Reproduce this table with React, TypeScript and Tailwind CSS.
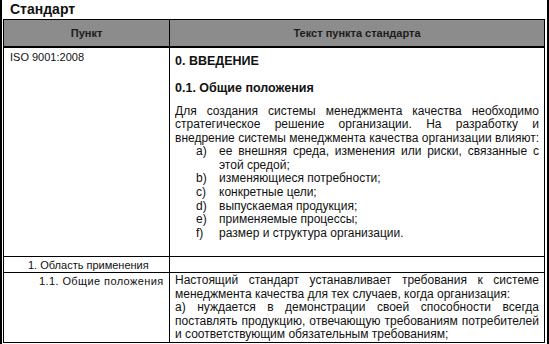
import React from "react";

const listItems: [string, string[]][] = [
  ["a)", ["ее внешняя среда, изменения или риски, связанные с", "этой средой;"]],
  ["b)", ["изменяющиеся потребности;"]],
  ["c)", ["конкретные цели;"]],
  ["d)", ["выпускаемая продукция;"]],
  ["e)", ["применяемые процессы;"]],
  ["f)", ["размер и структура организации."]],
];

// строка с выравниванием по ширине (последняя строка тоже растягивается)
function JLine({ children }: { children: React.ReactNode }) {
  return <div className="text-justify [text-align-last:justify]">{children}</div>;
}

export default function App() {
  return (
    <div className="w-[549px] h-[344px] overflow-hidden bg-white border-x-2 border-black text-[#111] font-['Liberation_Sans',Arial,sans-serif]">
      <div className="h-[19px] pl-[8px] text-[14px] font-bold leading-[18px]">Стандарт</div>
      <table className="ml-px w-[542px] table-fixed border-collapse">
        <colgroup>
          <col className="w-[166px]" />
          <col />
        </colgroup>
        <thead>
          <tr className="h-[27px] bg-[#8c8c8c] text-[11px] font-bold text-[#1c1c1c]">
            <th className="border border-b-2 border-black text-center">Пункт</th>
            <th className="border border-b-2 border-black text-center">Текст пункта стандарта</th>
          </tr>
        </thead>
        <tbody>
          <tr className="h-[210px] align-top">
            <td className="border border-black pl-[6px] pt-[3px] text-[11px] leading-[13px]">ISO 9001:2008</td>
            <td className="border border-black px-[5px] text-[12px] leading-[13.6px]">
              <div className="mt-[6px] text-[12.5px] font-bold leading-[15px]">0. ВВЕДЕНИЕ</div>
              <div className="mt-[12px] text-[12.5px] font-bold leading-[15px]">0.1. Общие положения</div>
              <div className="mt-[9px]">
                <JLine>Для создания системы менеджмента качества необходимо</JLine>
                <JLine>стратегическое решение организации. На разработку и</JLine>
                <JLine>внедрение системы менеджмента качества организации влияют:</JLine>
              </div>
              <div className="ml-[21px]">
                {listItems.map(([label, lines]) => (
                  <div key={label} className="flex">
                    <span className="w-[23px] shrink-0">{label}</span>
                    <div className="flex-1">
                      {lines.map((l, i) =>
                        lines.length > 1 && i === 0 ? <JLine key={i}>{l}</JLine> : <div key={i}>{l}</div>
                      )}
                    </div>
                  </div>
                ))}
              </div>
            </td>
          </tr>
          <tr className="h-[16px] align-middle">
            <td className="border border-black pl-[24px] text-[11px] leading-[14px]">1. Область применения</td>
            <td className="border border-black" />
          </tr>
          <tr className="align-top">
            <td className="border border-black pl-[35px] pt-[2px] text-[11px] leading-[13px] tracking-[0.4px]">1.1. Общие положения</td>
            <td className="border border-black px-[5px] pt-[1px] text-[12px] leading-[13.6px]">
              <JLine>Настоящий стандарт устанавливает требования к системе</JLine>
              <div>менеджмента качества для тех случаев, когда организация:</div>
              <JLine>а) нуждается в демонстрации своей способности всегда</JLine>
              <JLine>поставлять продукцию, отвечающую требованиям потребителей</JLine>
              <div>и соответствующим обязательным требованиям;</div>
            </td>
          </tr>
        </tbody>
      </table>
    </div>
  );
}
